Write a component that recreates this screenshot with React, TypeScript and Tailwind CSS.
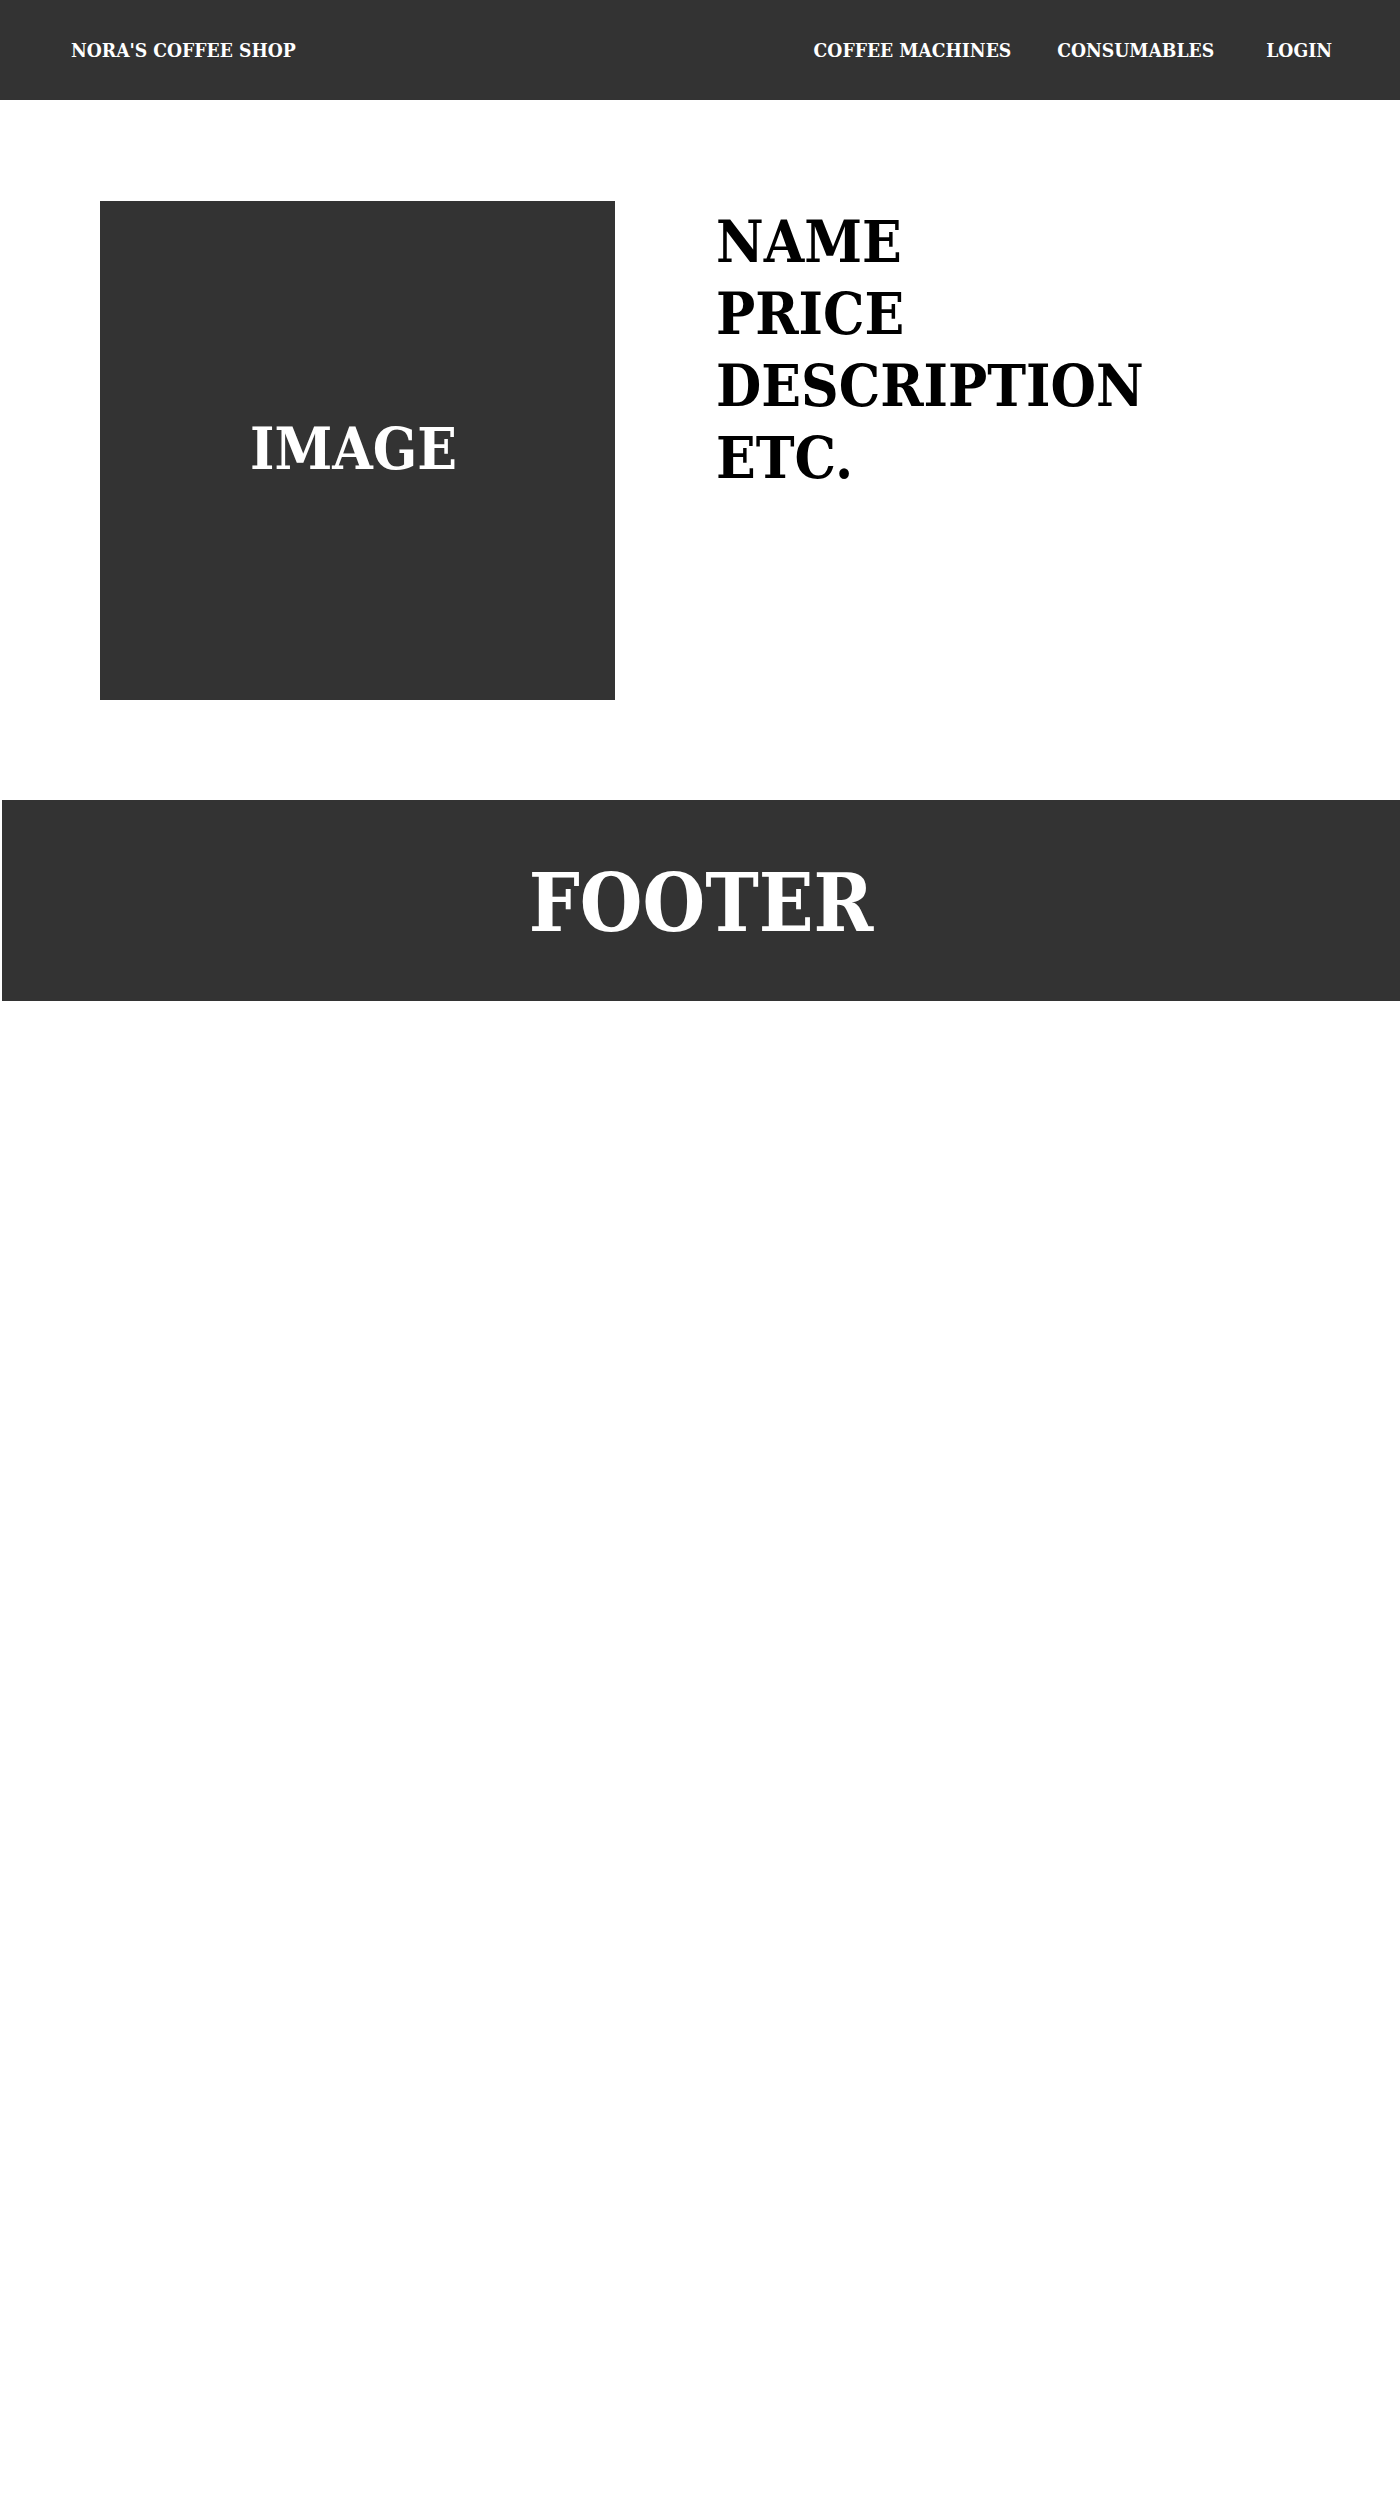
export default function App() {
  const font = "font-['DejaVu_Serif_Condensed','DejaVu_Serif',serif] font-stretch-condensed";
  return (
    <div className={`min-h-[2500px] bg-white ${font}`}>
      <header className="flex h-[100px] items-center justify-between bg-[#333333] pl-[71px] pr-[68px] pt-[2px] text-[19.2px] font-bold leading-none text-white">
        <a className="block">NORA'S COFFEE SHOP</a>
        <nav className="flex items-center">
          <a className="block">COFFEE MACHINES</a>
          <a className="ml-[46px] block">CONSUMABLES</a>
          <a className="ml-[52px] block">LOGIN</a>
        </nav>
      </header>

      <main className="flex items-start pb-[100px] pl-[100px] pt-[101px]">
        <div className="flex h-[499px] w-[515px] shrink-0 items-center justify-center bg-[#333333] pr-[8px] pb-[4px]">
          <span className="text-[58px] font-bold leading-none text-white">IMAGE</span>
        </div>
        <div className="ml-[101px] pt-[5px] text-[58px] font-bold leading-[72px] text-black">
          <p>NAME</p>
          <p>PRICE</p>
          <p>DESCRIPTION</p>
          <p>ETC.</p>
        </div>
      </main>

      <footer className="ml-[2px] flex h-[201px] items-center justify-center bg-[#333333] pt-[5px]">
        <span className="text-[80px] font-bold leading-none text-white">FOOTER</span>
      </footer>
    </div>
  );
}
